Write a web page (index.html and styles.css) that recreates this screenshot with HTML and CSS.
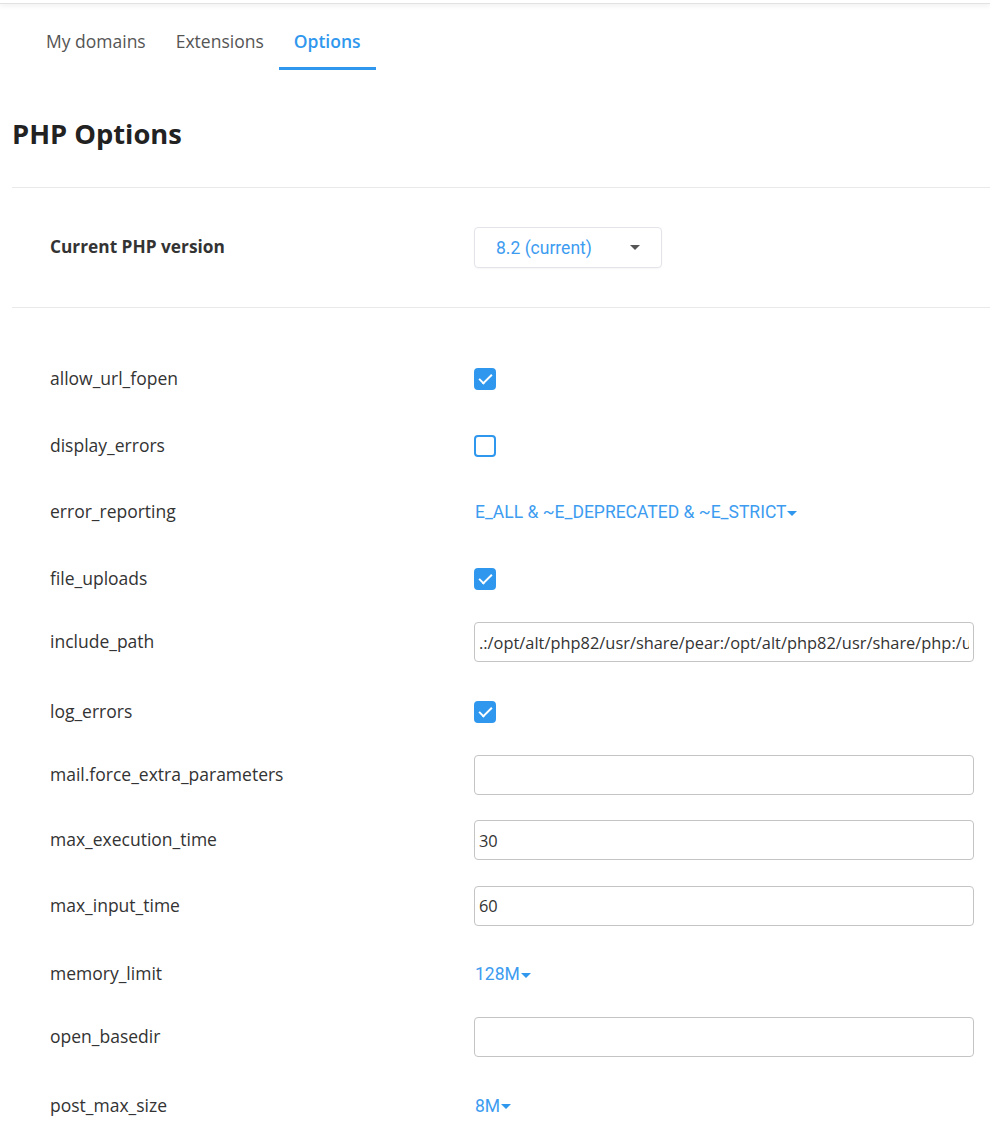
FILE: index.html
```html
<html>
   <head>
      <title>PHP Options</title>
      <link rel="stylesheet" href="styles.css">
   </head>
   <body>
      <div class="topbar"></div>
      <div class="page">
         <div class="tabs">
            <a class="tab">My domains</a>
            <a class="tab">Extensions</a>
            <a class="tab active">Options</a>
         </div>
         <h1 class="title">PHP Options</h1>
         <div class="version">
            <div class="label strong">Current PHP version</div>
            <div class="value">
               <div class="select">
                  <span>8.2 (current)</span>
                  <span class="caret"></span>
               </div>
            </div>
         </div>
         <div class="options">
            <div class="row cb">
               <div class="label">allow_url_fopen</div>
               <div class="value"><span class="check on"></span></div>
            </div>
            <div class="row cb">
               <div class="label">display_errors</div>
               <div class="value"><span class="check"></span></div>
            </div>
            <div class="row link">
               <div class="label">error_reporting</div>
               <div class="value"><a class="drop">E_ALL &amp; ~E_DEPRECATED &amp; ~E_STRICT<span class="caret"></span></a></div>
            </div>
            <div class="row cb">
               <div class="label">file_uploads</div>
               <div class="value"><span class="check on"></span></div>
            </div>
            <div class="row field">
               <div class="label">include_path</div>
               <div class="value"><input type="text" value=".:/opt/alt/php82/usr/share/pear:/opt/alt/php82/usr/share/php:/usr/share/pear:/usr/share/php" /></div>
            </div>
            <div class="row cb">
               <div class="label">log_errors</div>
               <div class="value"><span class="check on"></span></div>
            </div>
            <div class="row field">
               <div class="label">mail.force_extra_parameters</div>
               <div class="value"><input type="text" value="" /></div>
            </div>
            <div class="row field">
               <div class="label">max_execution_time</div>
               <div class="value"><input type="text" value="30" /></div>
            </div>
            <div class="row field">
               <div class="label">max_input_time</div>
               <div class="value"><input type="text" value="60" /></div>
            </div>
            <div class="row link">
               <div class="label">memory_limit</div>
               <div class="value"><a class="drop">128M<span class="caret"></span></a></div>
            </div>
            <div class="row field">
               <div class="label">open_basedir</div>
               <div class="value"><input type="text" value="" /></div>
            </div>
            <div class="row link">
               <div class="label">post_max_size</div>
               <div class="value"><a class="drop">8M<span class="caret"></span></a></div>
            </div>
         </div>
      </div>
   </body>
</html>
```

FILE: styles.css
```css
body {
   margin: 0;
   font-family: "Open Sans", sans-serif;
   font-size: 17.5px;
   color: #333;
   background: #fff;
   overflow: hidden;
}
.topbar {
   height: 3px;
   border-bottom: 1px solid #e2e2e2;
   box-shadow: 0 2px 5px rgba(0, 0, 0, 0.07);
}
.page {
   padding-left: 12px;
}
.tabs {
   display: flex;
   margin-top: 9px;
   padding-left: 19px;
}
.tab {
   padding: 16px 15px 14px;
   line-height: 24px;
   color: #555;
   border-bottom: 3px solid transparent;
}
.tab.active {
   color: #2f97ed;
   font-weight: 600;
   border-bottom-color: #2f97ed;
}
.title {
   margin: 45px 0 34px;
   font-size: 27.3px;
   line-height: 38px;
   font-weight: 700;
   color: #222;
}
.version {
   display: flex;
   align-items: center;
   padding: 39px 16px 39px 38px;
   border-top: 1px solid #e9e9e9;
   border-bottom: 1px solid #e9e9e9;
}
.label {
   width: 424px;
   flex: none;
   line-height: 22px;
   margin-top: -2px;
}
.label.strong {
   font-weight: 700;
   font-size: 17.3px;
}
.value {
   flex: 1;
   display: flex;
}
.select {
   display: flex;
   align-items: center;
   justify-content: space-between;
   width: 188px;
   height: 41px;
   box-sizing: border-box;
   padding: 0 21px 0 21px;
   border: 1px solid #e3e3ea;
   border-radius: 4px;
   box-shadow: 0 1px 2px rgba(0, 0, 0, 0.04);
   font-family: Roboto, sans-serif;
   font-size: 17.5px;
   color: #3d9cf0;
}
.select .caret {
   border-top-color: #555;
}
.caret {
   display: inline-block;
   width: 0;
   height: 0;
   border-left: 5px solid transparent;
   border-right: 5px solid transparent;
   border-top: 5px solid #2f97ed;
   margin-left: 1px;
   vertical-align: middle;
}
.options {
   padding: 38px 16px 20px 38px;
}
.row {
   display: flex;
   align-items: center;
}
.row.cb {
   padding: 22px 0 23px;
}
.row.field {
   padding: 9px 0 16.5px;
}
.row.link {
   padding: 21px 0 23px;
}
.check {
   display: block;
   width: 22px;
   height: 22px;
   box-sizing: border-box;
   border: 2px solid #2f97ed;
   border-radius: 4px;
   position: relative;
}
.check.on {
   background: #2f97ed;
}
.check.on::after {
   content: "";
   position: absolute;
   left: 6px;
   top: 1px;
   width: 5px;
   height: 11px;
   border-right: 2px solid #fff;
   border-bottom: 2px solid #fff;
   transform: rotate(45deg);
}
.drop {
   font-family: Roboto, sans-serif;
   font-size: 17.5px;
   line-height: 22px;
   color: #3d9cf0;
   padding-left: 1px;
}
input {
   width: 100%;
   height: 40px;
   box-sizing: border-box;
   padding: 0 4px;
   border: 1px solid #c4c4c4;
   border-radius: 4px;
   font-family: "Open Sans", sans-serif;
   font-size: 16.4px;
   color: #333;
}
```
